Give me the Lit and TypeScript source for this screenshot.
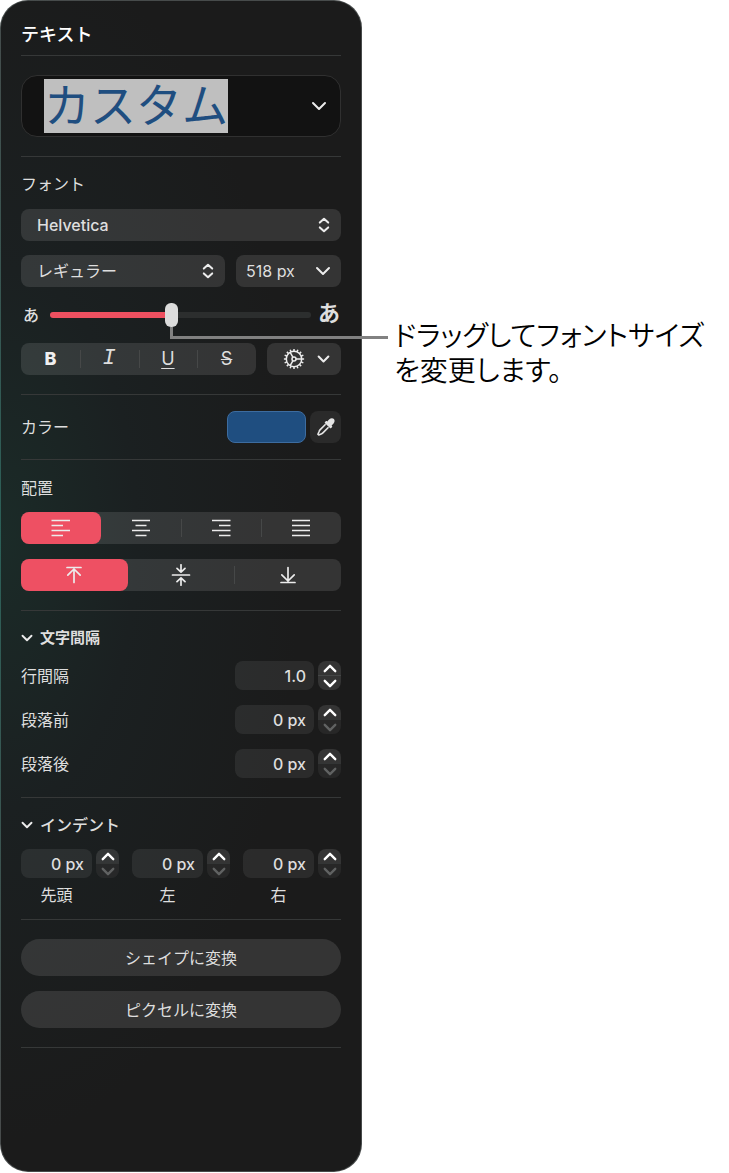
import { LitElement, html, svg, css } from "lit";
import { customElement, state } from "lit/decorators.js";
import { classMap } from "lit/directives/class-map.js";

type HAlign = "left" | "center" | "right" | "justify";
type VAlign = "top" | "middle" | "bottom";

const chevronDown = html`<svg class="icon" width="16" height="10" viewBox="0 0 16 10" aria-hidden="true">
  <path d="M2 2 8 8 14 2" /></svg>`;

const chevronUpDown = html`<svg class="icon" width="12" height="16" viewBox="0 0 12 16" aria-hidden="true">
  <path d="M1.8 5.6 6 1.700l4.200 3.900M1.800 10.400 6 14.300l4.200-3.900" /></svg>`;

const teeth = Array.from({ length: 16 }, (_, i) => svg`<path d="M11 .9v2.200" transform="rotate(${i * 22.5} 11 11)" />`);

const gear = html`<svg class="icon gear" width="22" height="22" viewBox="0 0 22 22" aria-hidden="true">
  <circle cx="11" cy="11" r="7.7" />
  <circle cx="11" cy="11" r="2" />
  <path d="M13 11h5.600M10 9.300 7.200 4.400M10 12.700l-2.800 4.900" />
  ${teeth}
</svg>`;

const dropper = html`<svg width="20" height="20" viewBox="0 0 20 20" aria-hidden="true">
  <path fill="#e4e4e4" d="M11.400 4.600C12.600 3 14 1.300 15.900 1.300c1.700 0 2.800 1.200 2.700 2.700-.1 1.700-1.600 3.200-3 4.500l.4.400c.4.4.4.9 0 1.300l-.9.900c-.3.3-.8.3-1.200 0L9 6.300c-.4-.4-.4-.9 0-1.300l.8-.8c.4-.4.9-.3 1.300.1z" />
  <path fill="none" stroke="#e4e4e4" stroke-width="1.600" stroke-linejoin="round" d="M9.600 7.300 4 12.900c-.5.5-.8 1.100-1 1.800L1.900 17.200l.8.800 2.500-1.100c.7-.2 1.200-.5 1.700-1L12.500 10.300" />
</svg>`;

const lineIcon = (rows: Array<[number, number]>) => html`<svg class="icon lines" width="20" height="18" viewBox="0 0 20 18" aria-hidden="true">
  ${rows.map(([a, b], i) => svg`<path d="M${a} ${1.5 + i * 5}H${b}" />`)}
</svg>`;

const hAligns: Array<{ id: HAlign; label: string; rows: Array<[number, number]> }> = [
  { id: "left", label: "左揃え", rows: [[0.5, 19], [0.5, 12], [0.5, 19], [0.5, 12]] },
  { id: "center", label: "中央揃え", rows: [[1, 19], [4.5, 15.5], [1, 19], [4.5, 15.5]] },
  { id: "right", label: "右揃え", rows: [[1, 19.5], [8, 19.5], [1, 19.5], [8, 19.5]] },
  { id: "justify", label: "両端揃え", rows: [[1, 19], [1, 19], [1, 19], [1, 19]] },
];

const vAligns: Array<{ id: VAlign; label: string; path: string }> = [
  { id: "top", label: "上", path: "M4 3.500h14M11 18.500V5M4.800 11.200 11 5l6.200 6.200" },
  { id: "middle", label: "中央", path: "M2.500 11h17M11 .8v7M7 4.300l4 3.800 4-3.800M11 21.200v-7M7 17.700l4-3.800 4 3.800" },
  { id: "bottom", label: "下", path: "M4 18.500h14M11 3.500V17M4.800 10.800 11 17l6.200-6.200" },
];

@customElement("app-root")
export class AppRoot extends LitElement {
  @state() private hAlign: HAlign = "left";
  @state() private vAlign: VAlign = "top";
  @state() private size = 518;

  private readonly maxSize = 1116;

  static styles = css`
    :host {
      display: flex;
      align-items: stretch;
      box-sizing: border-box;
      min-height: 100vh;
      padding-bottom: 1px;
      background: #fff;
      color: #dedede;
      font-family: Inter, "Noto Sans CJK JP", sans-serif;
      font-size: 16px;
      line-height: 24px;
    }
    *, *::before, *::after { box-sizing: border-box; }
    h1, h2, p { margin: 0; font-weight: inherit; font-size: inherit; }
    button, select, input { margin: 0; border: 0; font: inherit; color: inherit; }
    button { padding: 0; display: flex; align-items: center; justify-content: center; background: none; }

    .panel {
      flex: 0 0 362px;
      display: flex;
      flex-direction: column;
      padding: 0 20px 40px;
      border: 1px solid transparent;
      border-radius: 28px;
      background:
        radial-gradient(ellipse 300px 600px at 0 46%, #1b2b28, #1b2021 45%, transparent) padding-box,
        linear-gradient(#1b1b1b, #1b1b1b) padding-box,
        radial-gradient(ellipse 200px 560px at 0 46%, #2b5f57, #474b4b) border-box;
    }
    .section {
      display: flex;
      flex-direction: column;
      border-bottom: 1px solid #363838;
    }
    .title { padding: 22px 0 8px; }
    .title h1 { font-size: 18px; font-weight: 500; color: #fff; }
    .presets { padding: 19px 0; }
    .font { padding: 15px 0 19px; }
    .color { flex-direction: row; align-items: center; gap: 4px; padding: 16px 0; }
    .alignment { padding: 16px 0 19px; gap: 15px; }
    .alignment h2 { margin-bottom: -3px; }
    .spacing { padding: 15px 0 19px; gap: 15px; }
    .indent { padding: 15px 0 12px; gap: 12px; }
    .convert { padding: 19px 0; gap: 15px; }

    .icon {
      fill: none;
      stroke: #ececec;
      stroke-width: 2;
      stroke-linecap: round;
      stroke-linejoin: round;
    }
    .gear { stroke-width: 1.5; stroke-linecap: butt; }
    .lines { stroke-width: 1.5; stroke-linecap: butt; }
    .arrows { stroke-width: 1.7; }

    .preset {
      height: 62px;
      justify-content: space-between;
      padding: 0 13px 0 22px;
      border: 1px solid #303030;
      border-radius: 16px;
      background: #121212;
    }
    .preset-name {
      padding-bottom: 8px;
      background: #bfbfbf;
      color: #1f4e80;
      font-family: "Noto Sans CJK JP", sans-serif;
      font-weight: 400;
      font-size: 46px;
      line-height: 46px;
    }

    .row { display: grid; gap: 11px; }
    .row-style { grid-template-columns: 1fr 105px; margin-top: 14px; }
    .row-format { grid-template-columns: 1fr 74px; margin-top: 16px; }
    .font h2 { margin-bottom: 13px; }
    .pop { position: relative; display: block; height: 32px; }
    .pop select {
      appearance: none;
      width: 100%;
      height: 32px;
      padding: 0 30px 0 16px;
      border-radius: 8px;
      background: rgba(255, 255, 255, 0.11);
      font-size: 16px;
      font-weight: 500;
      line-height: 24px;
    }
    .pop .kana { font-weight: 400; }
    .pop .size { padding-left: 10px; font-weight: 400; }
    .pop .icon { position: absolute; top: 8px; right: 11px; pointer-events: none; }
    .pop .size + .icon { top: 11px; right: 10px; }

    .slider-row {
      display: flex;
      align-items: center;
      height: 24px;
      margin-top: 16px;
      font-weight: 500;
    }
    .small-a { width: 29px; padding-left: 2px; }
    .large-a { width: 30px; padding: 0 1px 4px 0; text-align: right; font-size: 22px; font-weight: 700; }
    .slider { position: relative; flex: 1; height: 24px; }
    .slider input {
      appearance: none;
      display: block;
      width: 100%;
      height: 24px;
      background: none;
    }
    .slider input::-webkit-slider-runnable-track {
      height: 6px;
      border-radius: 3px;
      background: linear-gradient(to right, #ee5060 var(--fill), #2c2e2e var(--fill));
    }
    .slider input::-webkit-slider-thumb {
      appearance: none;
      width: 13px;
      height: 24px;
      margin-top: -9px;
      border-radius: 6px;
      background: #dcdcdc;
    }
    .leader {
      position: absolute;
      left: 120px;
      top: 24px;
      width: 218px;
      height: 12px;
      border: solid #818181;
      border-width: 0 0 3px 3px;
      pointer-events: none;
    }

    .segments {
      display: grid;
      grid-auto-flow: column;
      grid-auto-columns: 1fr;
      height: 32px;
      border-radius: 8px;
      background: rgba(255, 255, 255, 0.11);
    }
    .segments button { position: relative; border-radius: 8px; }
    .segments button + button::before {
      content: "";
      position: absolute;
      left: 0;
      top: 7px;
      width: 1px;
      height: 18px;
      background: #464848;
    }
    .segments .active { background: #ee5063; }
    .segments .active + button::before { display: none; }
    .bold { font-weight: 800; font-size: 18px; color: #f0f0f0; }
    .italic { font-family: "Liberation Mono", monospace; font-style: italic; font-size: 22px; }
    .underline { font-size: 18px; text-decoration: underline; text-underline-offset: 3px; }
    .strike { font-size: 18px; text-decoration: line-through; text-decoration-thickness: 1px; }
    .more { gap: 12px; height: 32px; padding-left: 4px; border-radius: 8px; background: rgba(255, 255, 255, 0.11); }
    .more .icon + .icon { width: 13px; stroke-width: 2.5; }

    .color h2 { flex: 1; }
    .swatch { width: 79px; height: 32px; border: 1px solid #3d6c9f; border-radius: 8px; background: #1f4e80; }
    .picker { width: 31px; height: 32px; border-radius: 8px; background: #2a2a2a; }

    .disclosure { justify-content: flex-start; gap: 7px; height: 24px; font-weight: 500; }
    .disclosure .icon { width: 12px; height: 10px; stroke-width: 2.5; }
    .spacing .disclosure { margin-bottom: -4px; }
    .strong { font-size: 15px; font-weight: 700; }

    .line { display: grid; grid-template-columns: 1fr 79px 23px; gap: 4px; align-items: center; }
    .value {
      width: 100%;
      min-width: 0;
      height: 29px;
      padding: 0 8px 0 0;
      border-radius: 8px;
      background: rgba(255, 255, 255, 0.075);
      text-align: right;
      font-size: 16px;
      font-weight: 500;
    }
    .stepper {
      display: grid;
      grid-template-rows: 14px 15px;
      overflow: hidden;
      border-radius: 8px;
      background: rgba(255, 255, 255, 0.11);
    }
    .stepper .icon { width: 14px; height: 9px; stroke: #fff; stroke-width: 2.7; }
    .stepper button + button { border-top: 1px solid #444646; }
    .stepper button:disabled { background: rgba(0, 0, 0, 0.25); border-color: #333535; }
    .stepper button:disabled .icon { stroke: #606262; }
    .up .icon { transform: rotate(180deg); }

    .indents { display: grid; grid-template-columns: repeat(3, 1fr); gap: 13px; }
    .cell { display: grid; grid-template-columns: 1fr 23px; gap: 5px 4px; }
    .cell label { grid-row: 2; text-align: center; }

    .wide { height: 37px; border-radius: 19px; background: rgba(255, 255, 255, 0.11); }

    .callout {
      flex: 1;
      padding: 317px 12px 0 32px;
      color: #000;
      font-family: "Noto Sans CJK JP", sans-serif;
      font-size: 28px;
      font-weight: 350;
      line-height: 35px;
      font-feature-settings: "palt";
    }
  `;

  private stepper(label: string, canDecrease: boolean) {
    return html`<div class="stepper">
      <button class="up" aria-label="${label}を増やす">${chevronDown}</button>
      <button aria-label="${label}を減らす" ?disabled=${!canDecrease}>${chevronDown}</button>
    </div>`;
  }

  private spacingLine(id: string, label: string, value: string, canDecrease = false) {
    return html`<div class="line">
      <label for=${id}>${label}</label>
      <input class="value" id=${id} type="text" .value=${value} />
      ${this.stepper(label, canDecrease)}
    </div>`;
  }

  private indentCell(id: string, label: string) {
    return html`<div class="cell">
      <input class="value" id=${id} type="text" .value=${"0 px"} />
      ${this.stepper(label, false)}
      <label for=${id}>${label}</label>
    </div>`;
  }

  render() {
    const fill = `${(this.size / this.maxSize) * 100}%`;
    return html`
      <main class="panel">
        <header class="section title"><h1>テキスト</h1></header>

        <section class="section presets">
          <button class="preset" aria-haspopup="listbox">
            <span class="preset-name">カスタム</span>${chevronDown}
          </button>
        </section>

        <section class="section font">
          <h2>フォント</h2>
          <div class="pop">
            <select aria-label="フォント"><option>Helvetica</option></select>${chevronUpDown}
          </div>
          <div class="row row-style">
            <div class="pop">
              <select class="kana" aria-label="スタイル"><option>レギュラー</option></select>${chevronUpDown}
            </div>
            <div class="pop">
              <select class="size" aria-label="サイズ"><option>${this.size} px</option></select>${chevronDown}
            </div>
          </div>
          <div class="slider-row">
            <span class="small-a">あ</span>
            <div class="slider" style="--fill: ${fill}">
              <input type="range" min="0" max=${this.maxSize} .value=${String(this.size)} aria-label="フォントサイズ"
                @input=${(e: Event) => (this.size = Number((e.target as HTMLInputElement).value))} />
              <span class="leader"></span>
            </div>
            <span class="large-a">あ</span>
          </div>
          <div class="row row-format">
            <div class="segments">
              <button class="bold" aria-label="ボールド">B</button>
              <button class="italic" aria-label="イタリック">I</button>
              <button class="underline" aria-label="アンダーライン">U</button>
              <button class="strike" aria-label="取り消し線">S</button>
            </div>
            <button class="more" aria-label="詳細オプション">${gear}${chevronDown}</button>
          </div>
        </section>

        <section class="section color">
          <h2>カラー</h2>
          <button class="swatch" aria-label="カラー"></button>
          <button class="picker" aria-label="スポイト">${dropper}</button>
        </section>

        <section class="section alignment">
          <h2>配置</h2>
          <div class="segments">
            ${hAligns.map((a) => html`<button class=${classMap({ active: this.hAlign === a.id })} aria-label=${a.label}
              @click=${() => (this.hAlign = a.id)}>${lineIcon(a.rows)}</button>`)}
          </div>
          <div class="segments">
            ${vAligns.map((a) => html`<button class=${classMap({ active: this.vAlign === a.id })} aria-label=${a.label}
              @click=${() => (this.vAlign = a.id)}>
              <svg class="icon arrows" width="22" height="22" viewBox="0 0 22 22" aria-hidden="true"><path d=${a.path} /></svg>
            </button>`)}
          </div>
        </section>

        <section class="section spacing">
          <button class="disclosure strong" aria-expanded="true">${chevronDown}文字間隔</button>
          ${this.spacingLine("line-gap", "行間隔", "1.0", true)}
          ${this.spacingLine("before", "段落前", "0 px")}
          ${this.spacingLine("after", "段落後", "0 px")}
        </section>

        <section class="section indent">
          <button class="disclosure" aria-expanded="true">${chevronDown}インデント</button>
          <div class="indents">
            ${this.indentCell("first", "先頭")} ${this.indentCell("left", "左")} ${this.indentCell("right", "右")}
          </div>
        </section>

        <section class="section convert">
          <button class="wide">シェイプに変換</button>
          <button class="wide">ピクセルに変換</button>
        </section>
      </main>

      <p class="callout">ドラッグしてフォントサイズを変更します。</p>
    `;
  }
}
